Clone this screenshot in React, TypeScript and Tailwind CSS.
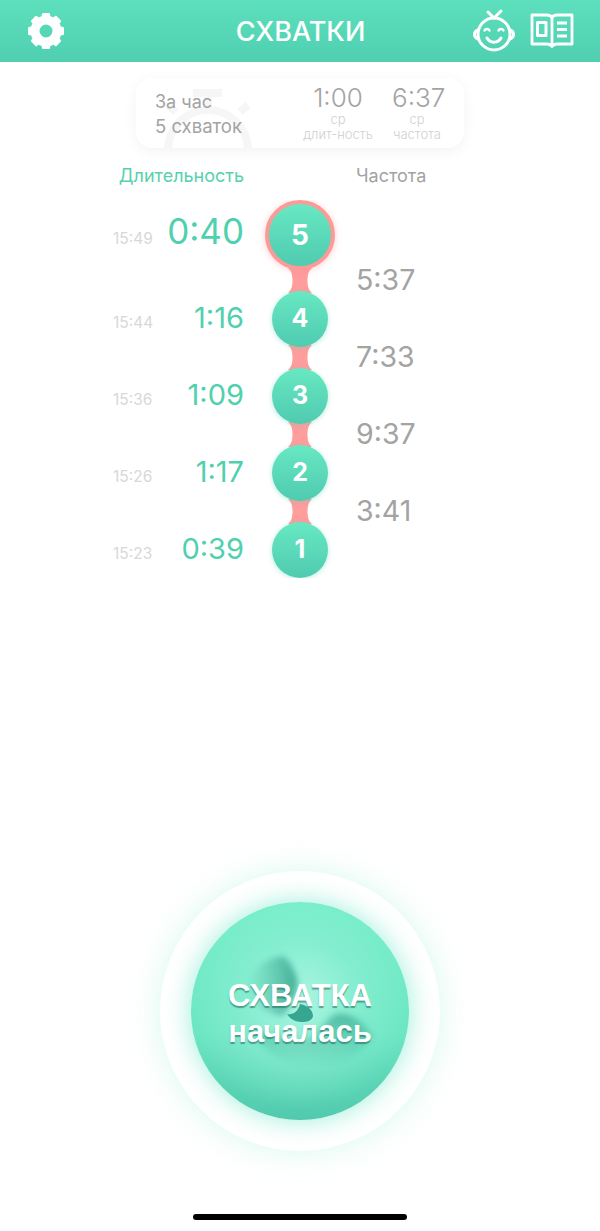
import { Fragment } from "react";

const rows = [
  { n: 5, time: "15:49", dur: "0:40" },
  { n: 4, time: "15:44", dur: "1:16" },
  { n: 3, time: "15:36", dur: "1:09" },
  { n: 2, time: "15:26", dur: "1:17" },
  { n: 1, time: "15:23", dur: "0:39" },
];

const freqs = ["5:37", "7:33", "9:37", "3:41"];

function GearIcon() {
  return (
    <svg width="38" height="38" viewBox="0 0 38 38" fill="none">
      <circle cx="19" cy="19" r="11" stroke="white" strokeWidth="9" />
      {[0, 45, 90, 135, 180, 225, 270, 315].map((a) => (
        <rect key={a} x="14.8" y="1" width="8.4" height="7" rx="1.5" fill="white" transform={`rotate(${a} 19 19)`} />
      ))}
    </svg>
  );
}

function BabyIcon() {
  return (
    <svg width="44" height="46" viewBox="0 0 44 46" fill="none" stroke="white" strokeWidth="3" strokeLinecap="round">
      <circle cx="21" cy="26" r="16" />
      <path d="M21 10 15 4M21 10 28 3" />
      <path d="M5 22C2.500 23 1.500 25 1.500 26.500S2.500 30 5 31M37 22c2.500 1 3.500 3 3.500 4.500S39.500 30 37 31" />
      <path d="M11.500 22.500c1-2 4-2 5 0M25.500 22.500c1-2 4-2 5 0" strokeWidth="2.400" />
      <path d="M14 30c3 5.500 11 5.500 14 0" />
    </svg>
  );
}

function BookIcon() {
  return (
    <svg width="44" height="36" viewBox="0 0 44 36" fill="none" stroke="white" strokeWidth="2.800" strokeLinejoin="round">
      <path d="M2 2h15c2.500 0 4 1 5 2.500C23 3 24.500 2 27 2h15v29H27c-2.500 0-4 1-5 2.500-1-1.500-2.500-2.500-5-2.500H2z" />
      <path d="M22 4.500v29" />
      <rect x="7.500" y="9.500" width="8.500" height="13" strokeWidth="3" />
      <path d="M27 10h10M27 16.500h10M27 23h10" strokeWidth="3" />
    </svg>
  );
}

function Connector() {
  return (
    <svg width="30" height="25" viewBox="0 0 30 25" className="-my-0.5 block shrink-0">
      <path d="M3 0C6.500 3 7.500 7 7.500 12.500S6.500 22 3 25H27C23.500 22 22.500 18 22.500 12.500S23.500 3 27 0Z" fill="#ff9c9c" />
    </svg>
  );
}

function Bubble({ n, active }: { n: number; active?: boolean }) {
  return (
    <div
      className={
        active
          ? "relative z-10 flex h-[70px] w-[70px] shrink-0 items-center justify-center rounded-full border-[4px] border-[#fc9a98] bg-gradient-to-b from-[#68e8c2] to-[#4fcbb0] shadow-[0_1px_6px_rgba(252,154,152,0.5)]"
          : "relative z-10 flex h-[56px] w-[56px] shrink-0 items-center justify-center rounded-full bg-gradient-to-b from-[#68e8c2] to-[#4fcbb0] shadow-[0_1px_5px_rgba(90,210,180,0.45)]"
      }
    >
      <span className={active ? "text-[28px] font-bold text-white" : "text-[25px] font-bold text-white"}>{n}</span>
    </div>
  );
}

export default function App() {
  return (
    <div className="flex h-[1231px] w-[600px] flex-col overflow-hidden bg-white font-['Inter',sans-serif]">
      <header className="flex h-[62px] shrink-0 items-center justify-between bg-gradient-to-b from-[#5de0bd] to-[#4fcfb0] pl-[27px] pr-[26px]">
        <div className="w-[101px]">
          <GearIcon />
        </div>
        <h1 className="text-[27px] font-medium leading-none text-white">СХВАТКИ</h1>
        <div className="flex w-[101px] items-center justify-between">
          <BabyIcon />
          <BookIcon />
        </div>
      </header>

      <div className="relative mx-auto mt-4 flex h-[70px] w-[328px] shrink-0 items-start overflow-hidden rounded-2xl bg-white pl-[19px] shadow-[0_3px_14px_rgba(0,0,0,0.05)]">
        <svg width="110" height="70" viewBox="0 0 110 70" fill="none" stroke="#f6f6f6" strokeWidth="8" className="absolute left-[22px] top-0">
          <path d="M35 15h29M50 15v14M82 34l8-7M18 34l-8-7" />
          <circle cx="50" cy="72" r="40" />
        </svg>
        <div className="relative mt-[11px] flex-1 text-[18px] leading-[25px] text-[#a3a3a3]">
          <div>За час</div>
          <div className="text-[18.5px]">5 схваток</div>
        </div>
        <div className="relative mr-[22px] mt-[5px] flex gap-[18px] text-center">
          <div className="w-[72px]">
            <div className="text-[26px] font-light leading-[30px] text-[#a3a3a3]">1:00</div>
            <div className="text-[13px] font-light leading-[13px] text-[#d0d0d0]">ср</div>
            <div className="whitespace-nowrap text-[13px] font-light leading-[16px] text-[#d0d0d0]">длит-ность</div>
          </div>
          <div className="w-[50px]">
            <div className="text-[26px] font-light leading-[30px] text-[#a3a3a3]">6:37</div>
            <div className="text-[13px] font-light leading-[13px] text-[#d0d0d0]">ср</div>
            <div className="text-[13px] font-light leading-[16px] text-[#d0d0d0]">частота</div>
          </div>
        </div>
      </div>

      <div className="mt-[17px] flex h-[22px] shrink-0 text-[18px] leading-[22px]">
        <div className="w-[244px] text-right text-[#57d1ae]">Длительность</div>
        <div className="ml-[112px] text-[#a3a3a3]">Частота</div>
      </div>

      <div className="mt-[13px] flex h-[378px] shrink-0 overflow-hidden">
        <div className="w-[244px] shrink-0">
          {rows.map((r, i) => (
            <div
              key={r.n}
              className={i === 0 ? "flex h-[79px] items-baseline justify-end pt-[6px]" : "flex h-[77px] items-baseline justify-end"}
            >
              <span className="mr-auto pl-[113px] text-[15.500px] text-[#d8d8d8]">{r.time}</span>
              <span
                className={
                  i === 0
                    ? "text-[35px] leading-[50px] text-[#4fd0ae]"
                    : "text-[29px] leading-[77px] text-[#4fd0ae]"
                }
              >
                {r.dur}
              </span>
            </div>
          ))}
        </div>
        <div className="flex w-[112px] shrink-0 flex-col items-center">
          {rows.map((r, i) => (
            <Fragment key={r.n}>
              <Bubble n={r.n} active={i === 0} />
              {i < rows.length - 1 && <Connector />}
            </Fragment>
          ))}
        </div>
        <div className="pt-[41px] text-[28.500px] leading-[77px] text-[#a3a3a3]">
          {freqs.map((f) => (
            <div key={f}>{f}</div>
          ))}
        </div>
      </div>

      <div className="mt-[293px] flex justify-center">
        <div className="flex h-[280px] w-[280px] items-center justify-center rounded-full bg-white shadow-[0_0_30px_rgba(100,230,195,0.25)]">
          <div className="relative flex h-[218px] w-[218px] items-center justify-center overflow-hidden rounded-full bg-[radial-gradient(circle_at_50%_45%,rgba(175,246,228,0.95)_0%,rgba(145,240,214,0.55)_38%,rgba(120,235,200,0)_68%),linear-gradient(180deg,#76eec8_0%,#6ce6c3_60%,#50c9ad_100%)] shadow-[0_0_26px_rgba(100,230,195,0.65)]">
            <svg width="218" height="218" viewBox="0 0 218 218" className="absolute inset-0">
              <defs>
                <linearGradient id="upperFade" x1="0" y1="0" x2="1" y2="0">
                  <stop offset="0" stopColor="#3aa993" stopOpacity="0" />
                  <stop offset="1" stopColor="#30a08a" stopOpacity="0.85" />
                </linearGradient>
                <linearGradient id="lowerFade" x1="0" y1="0" x2="0" y2="1">
                  <stop offset="0" stopColor="#35a68f" stopOpacity="0.7" />
                  <stop offset="1" stopColor="#3aae96" stopOpacity="0" />
                </linearGradient>
                <filter id="edgeBlur" x="-20%" y="-20%" width="140%" height="140%">
                  <feGaussianBlur stdDeviation="3" />
                </filter>
              </defs>
              <path d="M92 54C99 58 103 68 106 77 108 90 100 102 92 114 78 112 62 104 56 90 56 72 72 56 92 54Z" fill="url(#upperFade)" filter="url(#edgeBlur)" />
              <path d="M60 126C80 132 100 140 116 137 130 132 136 114 146 112 160 110 172 120 182 134 168 156 140 168 112 166 88 160 68 146 60 126Z" fill="url(#lowerFade)" filter="url(#edgeBlur)" />
              <path d="M109 102C116 103 122 108 122 114 121 119 116 120 110 120 104 120 98 116 96 112 102 113 107 110 109 102Z" fill="#36a690" />
            </svg>
            <div className="relative pt-[5px] text-center font-['Liberation_Sans',sans-serif] text-[31px] font-bold leading-[36px] text-white [text-shadow:0_2px_1px_rgba(35,110,95,0.6)]">
              <div>СХВАТКА</div>
              <div>началась</div>
            </div>
          </div>
        </div>
      </div>

      <div className="mx-auto mt-[63px] h-[6px] w-[214px] shrink-0 rounded-full bg-black" />
    </div>
  );
}
